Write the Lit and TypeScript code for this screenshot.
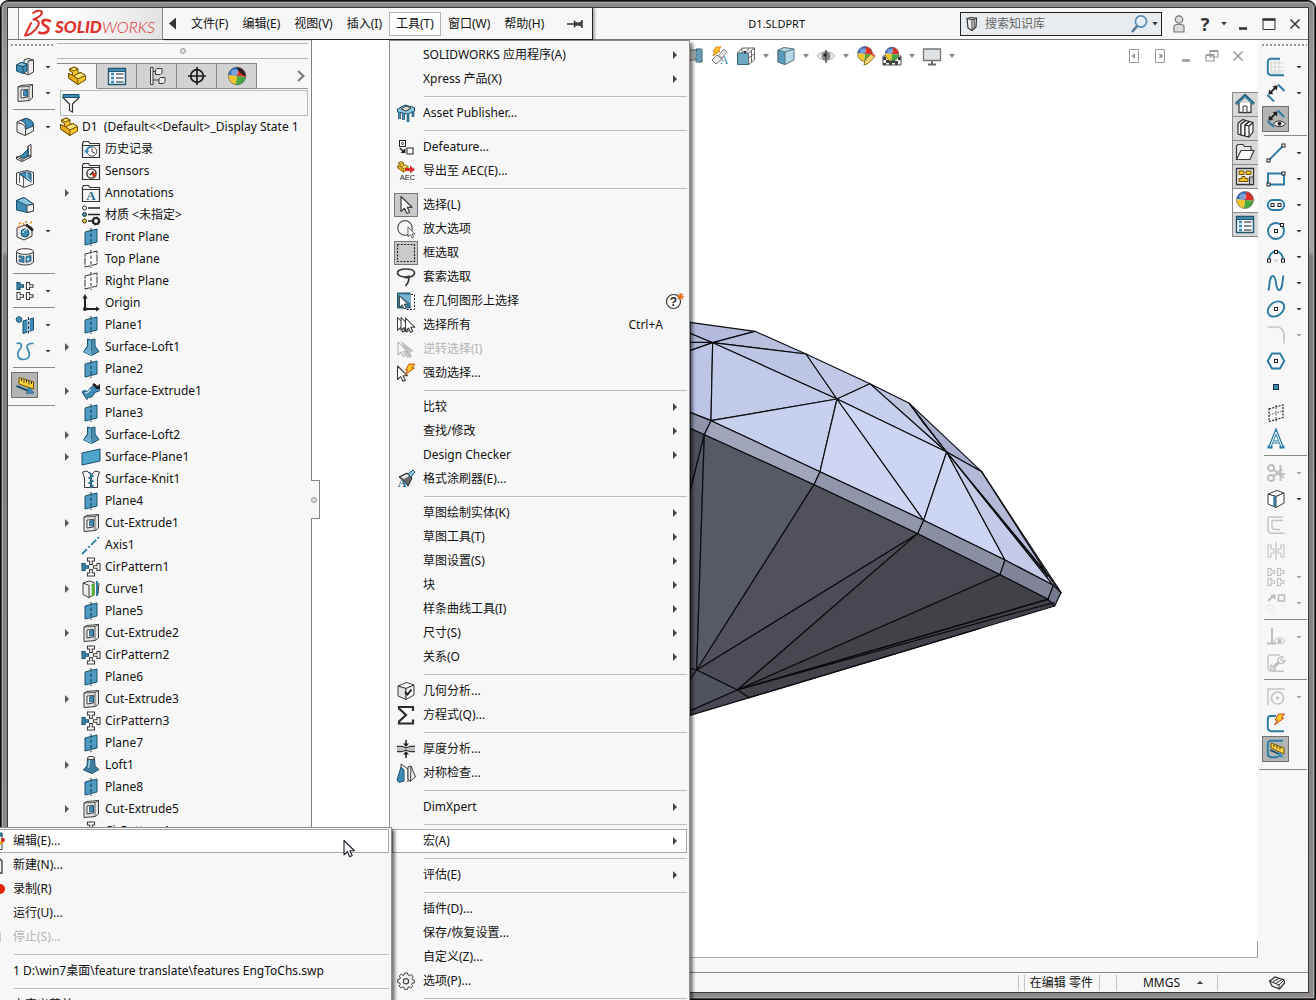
import { LitElement, html, svg, css, nothing, type SVGTemplateResult } from "lit";
import { customElement, property } from "lit/decorators.js";
import { classMap } from "lit/directives/class-map.js";

const BLUE = "#3f8db5";
const LIGHT = "#8cc8e0";
const DEEP = "#1b4f6b";
const INK = "#3c3c3c";

const ball = (cx: number, cy: number, r: number) => svg`
  <g transform="translate(${cx} ${cy})">
    <path d="M0 0L${-r} ${-r * 0.1}A${r} ${r} 0 0 1 ${r * 0.15} ${-r}Z" fill="#3572c6"/>
    <path d="M0 0L${r * 0.15} ${-r}A${r} ${r} 0 0 1 ${r} ${r * 0.1}Z" fill="#d9302a"/>
    <path d="M0 0L${r} ${r * 0.1}A${r} ${r} 0 0 1 ${-r * 0.15} ${r}Z" fill="#4aa842"/>
    <path d="M0 0L${-r * 0.15} ${r}A${r} ${r} 0 0 1 ${-r} ${-r * 0.1}Z" fill="#f0c52c"/>
    <ellipse cx="${-r * 0.25}" cy="${-r * 0.4}" rx="${r * 0.4}" ry="${r * 0.35}" fill="#fff" opacity=".35"/>
    <circle r="${r}" fill="none" stroke="#555" stroke-width=".6"/>
  </g>`;

const part = (s = 1, x = 0, y = 0) => svg`
  <g transform="translate(${x} ${y}) scale(${s})" stroke="#6b4d00" stroke-width="1" stroke-linejoin="round">
    <path d="M1.500 12V7.500L5.500 9.500V6.500L2.500 5V3L7 1L11 2.800V7.500L14 6.500L18.500 9.500V14L11 18.500Z" fill="#f6c62c"/>
    <path d="M2.500 3L7 1L11 2.800L6.500 5ZM10.500 13L18.500 9.500L14 6.500L6.500 9.600Z" fill="#ffe27a"/>
    <path d="M1.500 7.500L6.500 9.600L10.800 13.200V18.500L1.500 12Z" fill="#e9ae17"/>
  </g>`;

const folder = svg`<path d="M1.500 4.500V18.500H18.500V4.500H9L7.500 2.500H2.500Z" fill="#f4f4f4" stroke="#333" stroke-width="1.200"/><path d="M1.500 6.500H18.500" stroke="#333"/>`;

const pointer = (x: number, y: number, s: number, fill = "#fff", stroke = INK) => svg`
  <path transform="translate(${x} ${y}) scale(${s})" d="M0 0V15L3.600 11.800L6 17L8.600 15.800L6.200 10.800H11Z" fill="${fill}" stroke="${stroke}" stroke-width="1.200" stroke-linejoin="round"/>`;

const node = (x: number, y: number) => svg`<rect x="${x - 1.500}" y="${y - 1.500}" width="3" height="3" fill="#fff" stroke="#222"/>`;

const tee = (x: number, y: number, rot: number, fill: string, stroke = INK) => svg`
  <path transform="translate(${x} ${y}) rotate(${rot})" d="M-3 -3.500H0V-1.300H3.500V1.300H0V3.500H-3Z" fill="${fill}" stroke="${stroke}" stroke-width="1.100"/>`;

const cubeFaces = (top: string, left: string, right: string) => svg`
  <g stroke="${INK}" stroke-linejoin="round">
    <path d="M2 5L11 1.500L18 4L10 7.500Z" fill="${top}"/>
    <path d="M2 5L10 7.500V18.500L2 15Z" fill="${left}"/>
    <path d="M10 7.500L18 4V14L10 18.500Z" fill="${right}"/>
  </g>`;

const lightning = (x: number, y: number) => svg`<path transform="translate(${x} ${y})" d="M5 0L11 0L8 4H10.500L1 11L4 6H1.500Z" fill="#ffc52a" stroke="#c2410c" stroke-width=".9" stroke-linejoin="round"/>`;

const ICONS: Record<string, SVGTemplateResult> = {
  part: part(),
  boss: svg`<path d="M9 3L13 1.500L18.500 3V15L13 18L9 16Z" fill="#f0f0f0" stroke="${INK}"/><path d="M13 4V18M13 4L18.500 3" stroke="${INK}" fill="none"/><path d="M1.500 8L6 5.500L12 7V14L8 16.500L1.500 14Z" fill="${BLUE}" stroke="${DEEP}"/><path d="M1.500 8L6 5.500L12 7L8 9.500Z" fill="${LIGHT}" stroke="${DEEP}"/><path d="M8 9.500V16.500" stroke="${DEEP}"/>`,
  cut: svg`<path d="M3 4L6 2.500L17.500 1.500V15L14.500 17.500L3 18.500Z" fill="#e4e4e4" stroke="${INK}"/><path d="M3 4L14 3.500L17.500 1.500M14 3.500V17.500" fill="none" stroke="${INK}" stroke-width=".8"/><path d="M6 7L12.500 6.500V14L6 15Z" fill="#fff" stroke="${INK}"/><path d="M8.500 8L12.500 7V13L8.500 13Z" fill="${BLUE}" stroke="${DEEP}" stroke-width=".7"/>`,
  fillet: svg`<path d="M2 5L10 1.500C15 2 18 4 18.500 8V14L10 18.500L2 15Z" fill="#efefef" stroke="${INK}"/><path d="M6 3.500L10.500 1.500C15 2 18 4 18.500 9L11 12C11 8 10 5 6 3.500Z" fill="${BLUE}" stroke="${DEEP}"/><path d="M2 6C7 6 10 8 10.500 12V18" fill="none" stroke="${INK}"/>`,
  rib: svg`<path d="M13 3L16 1.500V14L7 18.500L1.500 16V14L13 11Z" fill="#efefef" stroke="${INK}" stroke-linejoin="round"/><path d="M13 3V12L16 14M7 18.500V16.500L1.500 14M7 16.500L16 12" fill="none" stroke="${INK}"/><path d="M13 6V13L8 15L5 14Z" fill="${BLUE}" stroke="${DEEP}"/>`,
  shell: svg`<path d="M1.500 4L12 1.500L18.500 3.500V15L9 18.500L1.500 15Z" fill="#f3f3f3" stroke="${INK}"/><path d="M4.500 5L12 3L16 4.500V13L8.500 8Z" fill="${BLUE}" stroke="${DEEP}"/><path d="M8.500 7V18M4.500 5V14" stroke="${INK}" stroke-width=".8"/><path d="M12 3V9L16 12" fill="none" stroke="#cfeaf5"/>`,
  draft: svg`<path d="M1.500 5.500L9 2.500L18.500 9V16L12 17.500L1.500 15Z" fill="${BLUE}" stroke="${DEEP}"/><path d="M1.500 5.500L9 2.500L18.500 9L12 10.500Z" fill="${LIGHT}" stroke="${DEEP}"/><path d="M12 10.500L18.500 9V16L12 17.500Z" fill="#f6f6f6" stroke="${INK}"/>`,
  wizard: svg`<path d="M2 7L10 4L17 6.500V15L9 19L2 16Z" fill="#efefef" stroke="${INK}"/><circle cx="10" cy="12" r="4" fill="${BLUE}" stroke="${DEEP}"/><path d="M8 12A3 3 0 0 1 12 9" stroke="#fff" fill="none"/><path d="M11 3.500L18 9.500" stroke="#222" stroke-width="2.600"/><path d="M4 3L6 1.500M8 2L9 4M10 1H12M15 2L17 1M3 6L5 5" stroke="#ef8a17" stroke-width="1.500"/>`,
  wrap: svg`<path d="M1.500 4.500V15C3 19 17 19 18.500 15V4.500" fill="#e9e9e9" stroke="${INK}"/><ellipse cx="10" cy="4.500" rx="8.500" ry="2.800" fill="#fafafa" stroke="${INK}"/><path d="M4 8.500L9 9.500V15.500L4 14.500V12.500L6.500 13V11L4 10.500Z" fill="${BLUE}" stroke="${DEEP}" stroke-width=".7"/><path d="M11 9.500L16 8.500V14L11 15.500Z" fill="${BLUE}" stroke="${DEEP}" stroke-width=".7"/><path d="M13 11V13.500" stroke="#fff" stroke-width="1.500"/>`,
  pattern: svg`${tee(5, 5, 0, BLUE, DEEP)}${tee(14.500, 5, 0, "#fff")}${tee(5, 15, 0, "#fff")}${tee(14.500, 15, 0, "#fff")}`,
  refgeom: svg`<circle cx="4" cy="4.500" r="2.800" fill="${BLUE}" stroke="${DEEP}"/><path d="M8 6L18.500 3V15L8 18.500Z" fill="${BLUE}" stroke="${DEEP}"/><path d="M13.500 2V19" stroke="#fff" stroke-width="2"/><path d="M13.500 2V19" stroke="#123" stroke-dasharray="3 1.500"/>`,
  curves: svg`<path d="M1.500 2.500C6 1 8 4 5 8C1 13 3 18.500 8 18.500C15 18.500 15.500 13 13 9C10.500 5 13 2 18.500 2.500" fill="none" stroke="${BLUE}" stroke-width="1.700"/>`,
  instant: svg`<path d="M4 2.500L18.500 7V14L4 9Z" fill="#ffd23a" stroke="#6b5200"/><path d="M6.500 3.500V6M9 4.500V8M11.500 5V7.500M14 6V9.500M16.500 6.500V9" stroke="#333"/><path d="M1.500 11L14 16" stroke="${DEEP}" stroke-width="2"/><path d="M11.500 18.500L19 18L14 12Z" fill="${BLUE}" stroke="${DEEP}" stroke-width=".6"/>`,
  history: svg`${folder}<circle cx="11" cy="12.500" r="4.700" fill="#fff" stroke="#555"/><path d="M5.500 12A5.500 5 0 0 1 11 7.500" fill="none" stroke="${BLUE}" stroke-width="1.800"/><path d="M3 11.500H8.500L5.800 15Z" fill="${BLUE}"/><path d="M11 9.500V12.500L14 14.500" fill="none" stroke="#222"/>`,
  sensor: svg`${folder}<circle cx="10.500" cy="12.500" r="4.600" fill="#fff" stroke="#333" stroke-width="1.400"/><path d="M10.500 12.500L15 11.500A4.600 4.600 0 0 1 12 16.500Z" fill="#e03a1e"/><path d="M9 14L12.500 10.500" stroke="#222" stroke-width="1.400"/>`,
  annot: svg`${folder}<text x="10" y="17" text-anchor="middle" font-family="Liberation Serif, serif" font-weight="bold" font-size="13" fill="#2a6d92">A</text>`,
  material: svg`<g stroke="#333"><circle cx="3.500" cy="3" r="2" fill="#fff"/><circle cx="3.500" cy="9.500" r="2" fill="${BLUE}"/><circle cx="3.500" cy="16" r="2" fill="#f6c62c"/></g><path d="M7 3H19M7 9.500H19M7 16H11" stroke="#222" stroke-width="1.600"/><circle cx="15" cy="16" r="3" fill="none" stroke="#222" stroke-width="2"/><circle cx="15" cy="16" r="4" fill="none" stroke="#222" stroke-dasharray="1.600 1.540"/>`,
  planeB: svg`<path d="M4 5L16 2V15L4 18Z" fill="#4f9cc2" stroke="${DEEP}"/><path d="M10 1V19" stroke="#12303f" stroke-dasharray="3.500 2"/>`,
  planeW: svg`<path d="M4 5L16 2V15L4 18Z" fill="#fafafa" stroke="#333" stroke-dasharray="7 1"/><path d="M10 1V19" stroke="#333" stroke-dasharray="3.500 2"/>`,
  origin: svg`<path d="M4 4V16H16" fill="none" stroke="#222" stroke-width="2"/><path d="M1.500 5.500H6.500L4 1ZM15 13.500V18.500L19 16Z" fill="#222"/><circle cx="4" cy="16" r="2" fill="#222"/>`,
  loftS: svg`<path d="M6.500 2L10 3L14 2V9L18 14.500L10.500 18.500L2.500 15L6.500 9Z" fill="#4c8fb0" stroke="${DEEP}"/><path d="M2.500 15L7.500 10V3L10 3.500V15L10.500 18.500Z" fill="#6dafce"/><path d="M10.500 3V14" stroke="#2b708f"/>`,
  extrudeS: svg`<path d="M1 11C4 7 6 14 9 7C11 5 13 6 14 3L19 9C17 11 15 10 13 13C10 19 8 14 6 18.500Z" fill="${BLUE}" stroke="${DEEP}"/><path d="M4 12C6 12 8 11 9.500 8" stroke="#b6deee" fill="none" stroke-width="1.500"/><path d="M12 3L17 7" stroke="#222" stroke-width="2.500"/><path d="M14 8H19V2.500Z" fill="#222"/>`,
  planeS: svg`<path d="M1 6L19 2V14L1 18Z" fill="#4fa6cb" stroke="${DEEP}"/>`,
  knit: svg`<path d="M1.500 3L6 2L9.500 5.500V18.500H3.500V9Z M18.500 3L14 2L10.500 5.500V18.500H16.500V9Z" fill="#f4f4f4" stroke="${INK}"/><path d="M8 3L12 7L8 9L12 12L8 14L12 17L9 19" fill="none" stroke="#2e7da6" stroke-width="1.500"/>`,
  axis: svg`<path d="M1 19L19 1" stroke="#2e7da6" stroke-width="1.800" stroke-dasharray="7 2 2 2"/>`,
  cir: svg`${tee(4, 10, 0, BLUE, DEEP)}${tee(10, 4, 90, "#fff")}${tee(16, 10, 180, "#fff")}${tee(10, 16, 270, "#fff")}`,
  curve: svg`<path d="M2 4L8 2L13 3.500V16L8 18.500L2 15.500Z" fill="#efefef" stroke="${INK}"/><path d="M2 4L8 6.500V18.500" fill="none" stroke="${INK}"/><path d="M12 5V17" stroke="#4caf2e" stroke-width="2.600"/><path d="M16 2V17" stroke="#2e7da6" stroke-width="2"/><path d="M18 4L17 15" stroke="${INK}"/>`,
  loft: svg`<path d="M6.500 3H13.500L14 11L18 14.500L11 18.500L2.500 15L6 11Z" fill="#427f9f" stroke="${DEEP}"/><ellipse cx="10" cy="3" rx="3.500" ry="1.600" fill="#fff" stroke="${INK}"/><path d="M8.500 5L7.500 13" stroke="#9fcfe2" stroke-width="1.500"/>`,
  list: svg`<path d="M1.500 2.500H18.500V18.500H1.500Z" fill="#f2f8fb" stroke="#24566e" stroke-width="1.400"/><path d="M1.500 2.500H18.500V5.500H1.500Z" fill="${BLUE}" stroke="#24566e"/><path d="M4 8H7M4 12H7M4 16H7" stroke="${BLUE}" stroke-width="2.400"/><path d="M9 8H16.500M9 12H16.500M9 16H16.500" stroke="#222" stroke-width="1.200"/>`,
  config: svg`<path d="M3.500 1.500H6V18.500H3.500Z" fill="#eee" stroke="${INK}"/><path d="M6 5.500H9M6 14H12" stroke="${INK}"/><g fill="#eee" stroke="${INK}"><path d="M8.500 4L10 2.500H15V7L13.500 8.500H8.500ZM12 13L13.500 11.500H18V15.500L16.500 17.500H12Z"/></g>`,
  target: svg`<circle cx="10" cy="10" r="6.300" fill="none" stroke="#1d1d1d" stroke-width="1.700"/><path d="M10 1V19M1 10H19" stroke="#1d1d1d" stroke-width="1.700"/>`,
  ball: ball(10, 10, 8.500),
  ballDark: svg`${ball(10, 10, 8.800)}<path d="M10 1.500C15 2 19 6 18.500 10C15 9 11 5 10 1.500Z" fill="#222"/>`,
  funnel: svg`<path d="M1.500 4L8.500 11V17.500L11.500 19V11L18.500 4" fill="#fff" stroke="#333" stroke-width="1.200"/><path d="M2 1.500H18V4.500H2Z" fill="${BLUE}" stroke="${DEEP}"/>`,
  asset: svg`<path d="M1.500 6L9 2L18.500 4.500V8L12 11L1.500 9Z" fill="${LIGHT}" stroke="${DEEP}"/><path d="M5 6L10 3L15 5L10 8Z" fill="#ddd" stroke="${INK}"/><path d="M3.500 9V16M7.500 10V17M12 11V19M17 8V14" stroke="${DEEP}" stroke-width="2.600"/><path d="M3.500 9V16M7.500 10V17M12 11V19M17 8V14" stroke="${BLUE}" stroke-width="1.200"/>`,
  defeature: svg`<rect x="3.500" y="3.500" width="6" height="6" fill="#fff" stroke="#222"/><circle cx="6.500" cy="6.500" r="1" fill="none" stroke="#222"/><rect x="11" y="11" width="6" height="6" fill="#fff" stroke="#222"/><path d="M4 11L8 15" stroke="#222" stroke-width="1.600"/><path d="M4.500 16H9.500V11Z" fill="#222"/>`,
  aec: svg`${part(0.6, 1, 0)}<path d="M9 7H14V4.500L19 8.500L14 12.500V10H9Z" fill="#dc2f2f"/><text x="11.500" y="19" text-anchor="middle" font-family="Liberation Sans, sans-serif" font-size="7.500" fill="#222">AEC</text>`,
  arrow: svg`${pointer(5, 1.500, 1)}`,
  zoomsel: svg`<circle cx="9" cy="9" r="7.300" fill="#f6f6f6" stroke="#555" stroke-width="1.200"/>${pointer(12, 8, 0.650)}`,
  box: svg`<rect x="1.500" y="1.500" width="17" height="17" fill="none" stroke="#222" stroke-width="1.200" stroke-dasharray="2 1.300"/>`,
  lasso: svg`<path d="M14 9C9 11 1.500 9.500 1.500 5.800C1.500 3.500 5 2 10 2C15 2 18.500 3.500 18.500 5.800C18.500 9 14 11 8.500 10.500M12 10C14 12 12 16.500 9.500 19" fill="none" stroke="#3a3a3a" stroke-width="1.700"/>`,
  selgeo: svg`<path d="M1.500 2H14V17H1.500Z" fill="#3f7f9f" stroke="#1b4f6b"/><path d="M2 3L14 12V4" fill="#78b5d0"/><path d="M15 3.500H18.500V18.500H10" fill="none" stroke="#222" stroke-dasharray="2 1.500"/>${pointer(3.500, 5, 0.750)}`,
  selall: svg`${pointer(1.500, 2.500, 0.850)}${pointer(5, 2.500, 0.850)}${pointer(9.500, 3, 0.850)}`,
  invert: svg`<path d="M5 2L18 12L14 13L16 18L11 19Z" fill="#c2c2c2"/>${pointer(2, 3, 0.850, "#f7f7f7", "#b5b5b5")}`,
  power: svg`${pointer(1.500, 3, 0.900)}${lightning(8, 1)}`,
  painter: svg`<path d="M3 8L11 4L16 9L12 17L8 12Z" fill="#6a6a6a" stroke="#222"/><path d="M5 8L11 5L13 7L8 10Z" fill="#eee"/><path d="M12 5L17 1L19 3L15 8Z" fill="${LIGHT}" stroke="${DEEP}"/><text x="6" y="18" text-anchor="middle" font-family="Liberation Serif, serif" font-weight="bold" font-size="12" fill="#2a6d92">A</text>`,
  geocheck: svg`${cubeFaces("#fff", "#e2e2e2", "#f3f3f3")}<path d="M9 11L11.500 13.500L15.500 8.500" fill="none" stroke="#222" stroke-width="2"/>`,
  sigma: svg`<path d="M17 6V2H3V3.500L10 10L3 16.500V18.500H17V14.500" fill="none" stroke="#2c2c2c" stroke-width="2.200"/>`,
  thick: svg`<path d="M1 7.500H6L10 9L14 7.500H19M1 12.500H6L10 11L14 12.500H19" fill="none" stroke="#333" stroke-width="1.300"/><path d="M1 9L6 9L10 10L14 9H19V11H14L10 10L6 11H1Z" fill="#bbb"/><path d="M10 1V6M10 14V19" stroke="#222" stroke-width="1.500"/><path d="M7 4.500H13L10 8ZM7 15.500H13L10 12Z" fill="#222"/>`,
  symm: svg`<path d="M1 17L5 4L8 7V18L3 19.500Z" fill="${BLUE}" stroke="${DEEP}"/><path d="M5 4V1L12 6V19" fill="none" stroke="${INK}"/><path d="M12 4L15 3L19.500 14L14 18.500L12 16Z" fill="#eee" stroke="${INK}"/><path d="M15 3L14.500 18" stroke="${INK}"/>`,
  gear: svg`<path d="M8.500 2H11.500L12 4L13.500 4.700L15.300 3.500L17 5.500L15.800 7.500L16.300 8.700L18.300 9V12L16 12.300L15.500 13.500L16.800 15.300L14.800 17L13 15.800L12 16.200L11.500 18.300H8.500L8 16.200L6.800 15.800L5 17L3 15L4.300 13.300L3.800 12L1.700 11.500V8.500L4 8L4.500 6.800L3.200 5L5.200 3.200L7 4.400L8 4Z" fill="#f2f2f2" stroke="#444"/><circle cx="10" cy="10.200" r="2.600" fill="#fff" stroke="#444" stroke-width="1.200"/>`,
  help: svg`<circle cx="8.500" cy="10.500" r="7" fill="#fff" stroke="#333" stroke-width="1.200"/><text x="8.500" y="15" text-anchor="middle" font-family="Liberation Sans, sans-serif" font-weight="bold" font-size="12" fill="#222">?</text><path d="M15.500 2V9M12 5.500H19M13 3L18 8M18 3L13 8" stroke="#e0731d" stroke-width="1.200"/>`,
  section: svg`<path d="M4 4H11V14H4Z" fill="#ddd" stroke="#777"/><path d="M10 4H14V14L10 12Z" fill="#e8e8e8" stroke="#777"/><path d="M12 3H18V16H12Z" fill="#5b95b0" stroke="#35637a"/><path d="M12 8L18 3M12 12L18 7M12 16L18 11" stroke="#9ec7d9" stroke-width=".7"/><path d="M1 4L5 3V17L1 18Z" fill="#49829c" stroke="#1b4f6b"/>`,
  light: svg`<path d="M2 14L7 9L12 13L6 18Z" fill="#eee" stroke="#777"/><path d="M8 10L14 3L17 6L12 12Z" fill="#e3e3e3" stroke="#888"/><path d="M6 1L11 1L8 5H10L3 10L5 6H3Z" fill="#ffc52a" stroke="#d8801a"/><text x="14" y="18" text-anchor="middle" font-family="Liberation Serif, serif" font-size="12" fill="#3f8db5">A</text>`,
  orient: svg`<path d="M1.500 7H12.500V18.500H1.500Z" fill="#6fa9c4" stroke="#35637a"/><path d="M1.500 7L6 2H18.500V14L12.500 18.500V7L18.500 2M6 2V7M12 2V5M15.500 5V16M12.500 12L18 8" fill="none" stroke="#666"/><path d="M7 5L9 8L11 5Z" fill="#333"/>`,
  display: svg`<path d="M2 4L8 1.500L18 3V14L9 18.500L2 16Z" fill="#b5d8e6" stroke="#55737f"/><path d="M9 6V18.500L2 16V4Z" fill="#5b9ab8" stroke="#55737f"/><path d="M9 6L18 3" stroke="#55737f"/>`,
  eye: svg`<path d="M1 10C5 4.500 15 4.500 19 10C15 15.500 5 15.500 1 10Z" fill="#eaeaea" stroke="#aaa"/><circle cx="10" cy="10" r="4.500" fill="#888"/><path d="M10 4V17" stroke="#555" stroke-width="1.500"/><circle cx="9" cy="9" r="1.500" fill="#222"/>`,
  ballpen: svg`${ball(9, 8, 7.500)}<path d="M8 19L9 14L15 8L18.500 11L12 17.500Z" fill="#f3d46a" stroke="#8a6d2a"/><path d="M15 8L18.500 11L19.500 9.500L17 7Z" fill="#e06b5a"/>`,
  scene: svg`<path d="M1 10H19V19H1Z" fill="#eee" stroke="#555"/><path d="M1 11H4V14H1ZM7 15H10V19H7ZM1 17H4V19H1ZM4 14H7V17H4ZM13 15H16V19H13ZM16 11H19V14H16ZM10 14H13V17H10Z" fill="#444"/>${ball(10, 8, 6.800)}`,
  monitor: svg`<path d="M1.500 3H18.500V14.500H1.500Z" fill="#dfe3e5" stroke="#777" stroke-width="1.300"/><path d="M10 15V18M6 18.500H14" stroke="#666" stroke-width="1.800"/>`,
  sketch: svg`<path d="M5 2V16H17M9 2V17M13 2V17M4 6H18M4 10H18M4 14H18" stroke="#ccc" stroke-width=".7" fill="none"/><path d="M14 1.800H5C3 1.800 1.800 3 1.800 5V14.500C1.800 17 3 18.200 5.500 18.200H18" fill="none" stroke="#2b7ba5" stroke-width="1.900"/>`,
  dim: svg`<path d="M8 18.500L1.500 12M18.500 8L12 1.500" stroke="#2b7ba5" stroke-width="1.900"/><path d="M4 10L10 4" stroke="#222" stroke-width="1.800"/><path d="M2.500 11.500L3 6.500L7.500 11ZM11.500 2.500L6.500 3L11 7.500Z" fill="#222"/>`,
  dimEye: svg`<path d="M8 18L1.500 12M18 8L12 1.500" stroke="#2b7ba5" stroke-width="1.900"/><path d="M4 10L10 4" stroke="#222" stroke-width="1.800"/><path d="M2.500 11.500L3 6.500L7.500 11ZM11.500 2.500L6.500 3L11 7.500Z" fill="#222"/><path d="M7.500 15C10 11 16.500 11 19.500 15C16.500 18.500 10 18.500 7.500 15Z" fill="#fff" stroke="#222"/><circle cx="13.500" cy="14.800" r="2" fill="#222"/>`,
  line: svg`<path d="M2.500 17.500L17.500 2.500" stroke="#2b7ba5" stroke-width="1.900"/>${node(2.500, 17.500)}${node(17.500, 2.500)}`,
  rect: svg`<path d="M2 4.500H18V15.500H2Z" fill="none" stroke="#2b7ba5" stroke-width="1.900"/>${node(2.500, 15.500)}${node(17.500, 4.500)}`,
  slot: svg`<rect x="1.800" y="5" width="16.400" height="10" rx="5" fill="none" stroke="#2b7ba5" stroke-width="1.900"/>${node(6.500, 10)}${node(13.500, 10)}`,
  circle: svg`<circle cx="10" cy="10" r="8" fill="none" stroke="#2b7ba5" stroke-width="1.900"/>${node(10, 10)}${node(16, 4)}`,
  arc: svg`<path d="M3 13C3 1.500 17 1.500 17 13" fill="none" stroke="#2b7ba5" stroke-width="1.900"/><path d="M8.500 12L11.500 15M11.500 12L8.500 15" stroke="#aaa" stroke-width=".8"/>${node(3, 13.500)}${node(10, 5)}${node(17, 13.500)}`,
  spline: svg`<path d="M2.500 17.500C4 12 3 3 7 3C11 3 9 17 13 17C17 17 16 8 17.500 2.500" fill="none" stroke="#2b7ba5" stroke-width="1.900"/>`,
  ellipse: svg`<ellipse cx="10" cy="10" rx="9" ry="6.700" transform="rotate(-38 10 10)" fill="none" stroke="#2b7ba5" stroke-width="1.900"/>${node(10, 10)}`,
  corner: svg`<path d="M1.500 2H10C15 2 18 5 18 10V18.500" fill="none" stroke="#8a8a8a" stroke-width="1.700"/>`,
  hex: svg`<path d="M6 2.500H14L18.300 10L14 17.500H6L1.700 10Z" fill="none" stroke="#2b7ba5" stroke-width="1.900"/>${node(10, 10)}`,
  point: svg`<rect x="7.500" y="7.500" width="5" height="5" fill="${BLUE}" stroke="#12303f"/>`,
  dashPlane: svg`<path d="M3 6L17 2V14.500L3 18.500Z" fill="none" stroke="#222" stroke-width="1.200" stroke-dasharray="2 1.300"/><path d="M10 2V19M3 12L17 8" stroke="#555" stroke-dasharray="1.500 1.500"/>`,
  textA: svg`<path d="M1.500 18H6.500M13.500 18H18.500M4 17.500L10 2.500L16 17.500M6.500 13H13.500" fill="none" stroke="#2b7ba5" stroke-width="3.200"/><path d="M4.200 17.500L10 3L15.800 17.500M7 13H13" fill="none" stroke="#fff" stroke-width="1"/>`,
  trim: svg`<g fill="none" stroke="#777" stroke-width="1.900"><circle cx="5" cy="5" r="3"/><circle cx="5" cy="15" r="3"/><path d="M7.500 6.500L18 15M7.500 13.500L16 6M14.500 2V18M10 11H19"/></g>`,
  convert: svg`${cubeFaces("#fff", "#fff", "#fff")}<path d="M8.500 7.500V17.500" stroke="#2b7ba5" stroke-width="2.400"/>`,
  offset: svg`<g fill="none" stroke="#888" stroke-width="1.500"><path d="M17 2H4C2.500 2 2 3 2 4V14C2 17 3 18.200 6 18.200H18.500"/><path d="M17 5.500H8C6.500 5.500 6 6 6 7V12C6 14 7 14.500 9 14.500H14"/></g>`,
  mirror: svg`<g fill="none" stroke="#888" stroke-width="1.200"><path d="M10 1V19M2 4V16H5V12H8V8H5V4ZM18 4V16H15V12H12V8H15V4Z"/></g>`,
  patternG: svg`${tee(5, 5, 0, "none", "#777")}${tee(14.500, 5, 0, "none", "#777")}${tee(5, 15, 0, "none", "#777")}${tee(14.500, 15, 0, "none", "#777")}`,
  move: svg`<path d="M2 8L8 2" stroke="#777" stroke-width="2"/><path d="M4 1.500H9.500V7Z" fill="#777"/><rect x="12.500" y="2" width="6" height="6" fill="none" stroke="#777" stroke-width="1.600"/><rect x="2" y="12" width="6" height="6" fill="none" stroke="#bbb" stroke-dasharray="1 1"/>`,
  relation: svg`<path d="M6 1V16M1 16.500H10" stroke="#777" stroke-width="1.900"/><path d="M8 14C10.500 10 16.500 10 19 14C16.500 17.500 10.500 17.500 8 14Z" fill="#fff" stroke="#777"/><circle cx="13.500" cy="14" r="2" fill="#777"/>`,
  repair: svg`<path d="M14 2H4C2.500 2 2 3 2 4V14C2 17 3 18.200 6 18.200H18" fill="none" stroke="#888" stroke-width="1.500"/><path d="M8 14L14 8" stroke="#777" stroke-width="3"/><path d="M17 4A3.500 3.500 0 1 0 19 7.500L16.500 8L15 6.500Z" fill="#fff" stroke="#777" stroke-width="1.200"/><path d="M5.500 12A3 3 0 1 0 9.500 16.500L7.500 15Z" fill="#fff" stroke="#777" stroke-width="1.200"/>`,
  snap: svg`<path d="M2 18.500V2H18.500" fill="none" stroke="#888" stroke-width="1.500"/><circle cx="11.500" cy="11" r="6" fill="none" stroke="#888" stroke-width="1.700"/><circle cx="11.500" cy="11" r="1.700" fill="#888"/>`,
  rapid: svg`<path d="M10 3H4.500C2.500 3 1.800 4 1.800 6V14.500C1.800 17 3 18.200 5.500 18.200H18" fill="none" stroke="#2b7ba5" stroke-width="1.900"/>${lightning(7.500, 1)}`,
  instant2: svg`<path d="M17 1.800H5C3 1.800 1.800 3 1.800 5V14.500C1.800 17 3 18.200 5.500 18.200H12" fill="none" stroke="#2b7ba5" stroke-width="1.900"/><path d="M5 4L18 9V15L5 9Z" fill="#ffd23a" stroke="#6b5200"/><path d="M8 5.500V8M11 6.500V9.500M14 8V10.500" stroke="#333"/><path d="M4 11L13 15" stroke="${DEEP}" stroke-width="1.800"/><path d="M11 18L18 18.500L13.500 12.500Z" fill="${BLUE}"/>`,
  home: svg`<path d="M4 9V18.500H16V9" fill="#fff" stroke="${INK}" stroke-width="1.300"/><path d="M1 10L10 1.500L19 10" fill="none" stroke="#24566e" stroke-width="3"/><path d="M1.500 10L10 2.200L18.500 10" fill="none" stroke="${BLUE}" stroke-width="1.200"/><path d="M8 18V12H12V18" fill="#eee" stroke="${INK}"/>`,
  books: svg`<g fill="#f5f5f5" stroke="#222" stroke-width="1.100" stroke-linejoin="round"><path d="M3 5L8 1.500L11 2.500L6 6V17L3 16Z"/><path d="M6 6L11 2.500L14.500 3.500L10 7V18L6 17Z"/><path d="M10 7L14.500 3.500L18 4.500V14L14 19L10 18Z"/><path d="M14 8V19M14 8L18 4.500M10 7L14 8"/></g>`,
  openf: svg`<path d="M1.500 17V4L3 2.500H8L9.500 4.500H16V8" fill="#e8e8e8" stroke="${INK}" stroke-width="1.200"/><path d="M1.500 17.500L6 8.500H19L15 17.500Z" fill="#f8f8f8" stroke="${INK}" stroke-width="1.200"/>`,
  palette: svg`<path d="M1.500 2.500H18.500V18.500H1.500Z" fill="#eee" stroke="#333" stroke-width="1.300"/><path d="M4 5H9V8.500H4ZM11 5H16V8.500H11ZM4 15.500V12.500H7V10.500H10V12.500H13V15.500Z" fill="#f6c62c" stroke="#6b4d00"/><path d="M14.500 11H18.500V18.500H14.500Z" fill="#bbb" stroke="#333"/>`,
  macroEdit: svg`<path d="M4 2.500H16V18.500H4Z" fill="#fff" stroke="${INK}"/><path d="M4 2H16V5H4Z" fill="${BLUE}" stroke="${DEEP}"/><path d="M8 17L17 10" stroke="#e0a52a" stroke-width="3"/><circle cx="17" cy="9" r="2" fill="#c22"/>`,
  macroNew: svg`<path d="M5 3H13L16 6V18H5Z" fill="#eee" stroke="${INK}" stroke-width="1.300"/><path d="M7 10H14" stroke="${INK}"/>`,
  record: svg`<circle cx="14" cy="10" r="5" fill="#e02408"/>`,
  play: svg`<path d="M5 4L14 10L5 16Z" fill="#ddd"/>`,
  stop: svg`<rect x="5" y="5" width="10" height="10" fill="#ccc"/>`,
  pin: svg`<path d="M2 10H9M17 6V14M9.500 6.500V13.500" stroke="#333" stroke-width="1.400"/><path d="M9.500 7.500L13 8.500L17 7V13L13 11.500L9.500 12.500Z" fill="#444"/>`,
  swcube: svg`<path d="M5 4.500L9 3.500L14.500 4.200L14 13L10 16.500L6 14Z" fill="#eee" stroke="#333" stroke-width="1.200"/><path d="M5 4.500L10 5.800L14.500 4.200M10 5.800V16.500M12.200 5V14.500" fill="none" stroke="#333"/>`,
  lens: svg`<path d="M3 18L8.500 11.500" stroke="#5b7896" stroke-width="2.600"/><circle cx="12" cy="7.500" r="5.600" fill="#e4eff8" stroke="#5b8cb8" stroke-width="1.700"/><path d="M9 7A3.500 3.500 0 0 1 12 4" fill="none" stroke="#fff" stroke-width="1.400"/>`,
  person: svg`<circle cx="10" cy="5.500" r="3.700" fill="#ddd" stroke="#777" stroke-width="1.200"/><path d="M5 18V12.500C5 9.500 15 9.500 15 12.500V18Z" fill="#ddd" stroke="#777" stroke-width="1.200"/>`,
  min: svg`<path d="M6 14.500H14" stroke="currentColor" stroke-width="2.600"/>`,
  max: svg`<path d="M4 5.500H16V15.500H4Z" fill="none" stroke="currentColor"/><path d="M3.500 5.500H16.500" stroke="currentColor" stroke-width="2.600"/>`,
  close: svg`<path d="M5.500 5.500L14.500 14.500M14.500 5.500L5.500 14.500" stroke="currentColor" stroke-width="1.500"/>`,
  restore: svg`<path d="M8 5H16V11H8ZM4 9H12V15H4Z" fill="#fff" stroke="currentColor" stroke-width="1.200"/><path d="M8 5H16M4 9H12" stroke="currentColor" stroke-width="1.800"/>`,
  paneL: svg`<path d="M5.500 3.500H14.500V16.500H5.500Z" fill="none" stroke="currentColor"/><path d="M11 7V13L7.500 10Z" fill="currentColor"/>`,
  paneR: svg`<path d="M5.500 3.500H14.500V16.500H5.500Z" fill="none" stroke="currentColor"/><path d="M9.500 7V13L13.500 10Z" fill="currentColor"/>`,
  tag: svg`<path d="M2.500 8L8 4L17 7L17.500 10L12.500 16L5 13Z" fill="#eee" stroke="#333" stroke-width="1.200"/><path d="M2.500 8L12 12L17 7M12 12V16M6 8.500L12 5.500M9 10L15 6.500" fill="none" stroke="#333"/>`,
};

const icon = (name: string) => html`<svg class="icon" width="20" height="20" viewBox="0 0 20 20" aria-hidden="true">${ICONS[name]}</svg>`;

interface Tool { icon?: string; drop?: boolean; off?: boolean; on?: boolean; sep?: boolean }
const t = (i: string, flags = ""): Tool => ({ icon: i, drop: flags.includes("d"), off: flags.includes("x"), on: flags.includes("p") });
const SEP: Tool = { sep: true };

const LEFT_TOOLS: Tool[] = [
  t("boss", "d"), t("cut", "d"), SEP,
  t("fillet", "d"), t("rib"), t("shell"), t("draft"), t("wizard", "d"), t("wrap"), SEP,
  t("pattern", "d"), SEP, t("refgeom", "d"), t("curves", "d"), SEP, t("instant", "p"), SEP,
];

const RIGHT_TOOLS: Tool[] = [
  t("sketch", "d"), t("dim", "d"), t("dimEye", "p"), SEP,
  t("line", "d"), t("rect", "d"), t("slot", "d"), t("circle", "d"), t("arc", "d"), t("spline", "d"),
  t("ellipse", "d"), t("corner", "dx"), t("hex"), t("point"), t("dashPlane"), t("textA"), SEP,
  t("trim", "dx"), t("convert", "d"), t("offset", "x"), t("mirror", "x"), t("patternG", "dx"), t("move", "dx"), SEP,
  t("relation", "dx"), t("repair", "x"), SEP, t("snap", "dx"), t("rapid"), t("instant2", "p"), SEP,
];

const TREE: [string, string, boolean?][] = [
  ["history", "历史记录"], ["sensor", "Sensors"], ["annot", "Annotations", true], ["material", "材质 <未指定>"],
  ["planeB", "Front Plane"], ["planeW", "Top Plane"], ["planeW", "Right Plane"], ["origin", "Origin"],
  ["planeB", "Plane1"], ["loftS", "Surface-Loft1", true], ["planeB", "Plane2"], ["extrudeS", "Surface-Extrude1", true],
  ["planeB", "Plane3"], ["loftS", "Surface-Loft2", true], ["planeS", "Surface-Plane1", true], ["knit", "Surface-Knit1"],
  ["planeB", "Plane4"], ["cut", "Cut-Extrude1", true], ["axis", "Axis1"], ["cir", "CirPattern1"],
  ["curve", "Curve1", true], ["planeB", "Plane5"], ["cut", "Cut-Extrude2", true], ["cir", "CirPattern2"],
  ["planeB", "Plane6"], ["cut", "Cut-Extrude3", true], ["cir", "CirPattern3"], ["planeB", "Plane7"],
  ["loft", "Loft1", true], ["planeB", "Plane8"], ["cut", "Cut-Extrude5", true], ["cir", "CirPattern4"],
];

interface Item { label?: string; icon?: string; sub?: boolean; key?: string; on?: boolean; off?: boolean; hot?: boolean; help?: boolean }
const LINE: Item = {};
const m = (label: string, extra: Partial<Item> = {}): Item => ({ label, ...extra });
const sub = (label: string): Item => ({ label, sub: true });

const TOOLS_MENU: Item[] = [
  sub("SOLIDWORKS 应用程序(A)"), sub("Xpress 产品(X)"), LINE,
  m("Asset Publisher...", { icon: "asset" }), LINE,
  m("Defeature...", { icon: "defeature" }), m("导出至 AEC(E)...", { icon: "aec" }), LINE,
  m("选择(L)", { icon: "arrow", on: true }), m("放大选项", { icon: "zoomsel" }),
  m("框选取", { icon: "box", on: true }), m("套索选取", { icon: "lasso" }),
  m("在几何图形上选择", { icon: "selgeo", help: true }), m("选择所有", { icon: "selall", key: "Ctrl+A" }),
  m("逆转选择(I)", { icon: "invert", off: true }), m("强劲选择...", { icon: "power" }), LINE,
  sub("比较"), sub("查找/修改"), sub("Design Checker"), m("格式涂刷器(E)...", { icon: "painter" }), LINE,
  sub("草图绘制实体(K)"), sub("草图工具(T)"), sub("草图设置(S)"), sub("块"), sub("样条曲线工具(I)"), sub("尺寸(S)"), sub("关系(O"), LINE,
  m("几何分析...", { icon: "geocheck" }), m("方程式(Q)...", { icon: "sigma" }), LINE,
  m("厚度分析...", { icon: "thick" }), m("对称检查...", { icon: "symm" }), LINE,
  sub("DimXpert"), LINE, m("宏(A)", { sub: true, hot: true }), LINE, sub("评估(E)"), LINE,
  m("插件(D)..."), m("保存/恢复设置..."), m("自定义(Z)..."), m("选项(P)...", { icon: "gear" }), LINE,
];

const MACRO_MENU: Item[] = [
  m("编辑(E)...", { icon: "macroEdit", hot: true }), m("新建(N)...", { icon: "macroNew" }), m("录制(R)", { icon: "record" }),
  m("运行(U)...", { icon: "play" }), m("停止(S)...", { icon: "stop", off: true }), LINE,
  m("1 D:\\win7桌面\\feature translate\\features EngToChs.swp"), LINE, m("自定义菜单(M)"),
];

const base = css`
  * { box-sizing: border-box; }
  button { font: inherit; color: inherit; background: none; border: 0; padding: 0; margin: 0; text-align: left; }
  .icon { display: block; flex: none; overflow: visible; }
`;

@customElement("sw-menu")
class SwMenu extends LitElement {
  @property({ attribute: false }) items: Item[] = [];

  static styles = [base, css`
    :host { display: block; background: #f7f7f7; border: 1px solid #8f8f8f; padding: 1px 2px; box-shadow: 3px 3px 3px rgba(0, 0, 0, .5); }
    .row { display: flex; align-items: center; width: 100%; height: 24px; border: 1px solid transparent; white-space: nowrap; }
    .hot { background: #fff; border-color: #a9a9a9; }
    .off { color: #b4b4b4; }
    .slot { flex: none; width: 24px; height: 24px; margin-left: 1px; margin-right: 5px; display: flex; align-items: center; justify-content: center; }
    .on { background: #c9cacc; border: 1px solid #777; }
    .label { flex: 1; }
    .key { margin-right: 23px; }
    .more { width: 4px; height: 8px; margin-right: 9px; background: #444; clip-path: polygon(0 0, 100% 50%, 0 100%); }
    .help { margin-right: 1px; }
    hr { margin: 5px 0 4px 32px; border: 0; height: 1px; background: #bdbdbd; }
  `];

  render() {
    return this.items.map((i) => i.label === undefined ? html`<hr>` : html`
      <button class=${classMap({ row: true, hot: !!i.hot, off: !!i.off })} ?disabled=${i.off}>
        <span class=${classMap({ slot: true, on: !!i.on })}>${i.icon ? icon(i.icon) : nothing}</span>
        <span class="label">${i.label}</span>
        ${i.key ? html`<span class="key">${i.key}</span>` : nothing}
        ${i.help ? html`<span class="help">${icon("help")}</span>` : nothing}
        ${i.sub ? html`<span class="more"></span>` : nothing}
      </button>`);
  }
}

@customElement("sw-toolbar")
class SwToolbar extends LitElement {
  @property({ attribute: false }) tools: Tool[] = [];

  static styles = [base, css`
    :host { display: block; padding: 4px 2px 0 3px; }
    .grip { height: 2px; margin-bottom: 8px; background: repeating-linear-gradient(90deg, #999 0 2px, transparent 2px 4px); }
    .row { display: flex; align-items: center; height: 26px; }
    .tool { width: 27px; height: 26px; display: flex; align-items: center; justify-content: center; }
    .on { background: #b4b4b4; border: 1px solid #707070; }
    .off { opacity: .45; filter: grayscale(1); }
    .drop { margin-left: 7px; width: 6px; height: 3px; background: #333; clip-path: polygon(0 0, 100% 0, 50% 100%); }
    hr { margin: 3px 0 4px 2px; border: 0; height: 1px; background: #8a8a8a; }
    hr:last-of-type { margin: 7px 0 0 -3px; }
  `];

  render() {
    return html`<div class="grip"></div>${this.tools.map((x) => x.sep ? html`<hr>` : html`
      <div class=${classMap({ row: true, off: !!x.off })}>
        <button class=${classMap({ tool: true, on: !!x.on })} aria-label=${x.icon!}>${icon(x.icon!)}</button>
        ${x.drop ? html`<span class="drop"></span>` : nothing}
      </div>`)}`;
  }
}

const FACETS: [string, string][] = [
  ["30,37 225,64 98,98 30,70", "#b3badb"],
  ["30,70 98,98 30,122", "#b0b7d6"],
  ["225,64 378,132 98,98", "#b9c0df"],
  ["30,122 98,98 93,332 30,307", "#bcc5e6"],
  ["98,98 378,132 471,267", "#bdc5e4"],
  ["98,98 471,267 93,332", "#c2cae9"],
  ["378,132 570,221 471,267", "#c0c8e6"],
  ["570,221 471,267 800,426", "#c6cfed"],
  ["570,221 688,280 800,426", "#bcc4e0"],
  ["688,280 905,485 800,426", "#a7aecb"],
  ["93,332 471,267 420,485", "#c8d0ef"],
  ["471,267 731,631 420,485", "#cdd5f3"],
  ["471,267 800,426 731,631", "#cdd5f4"],
  ["800,426 975,750 731,631", "#ccd5f4"],
  ["800,426 1120,826 975,750", "#c3cbe9"],
  ["800,426 905,485 1143,848 1120,826", "#b3bad7"],
  ["30,307 93,332 73,374 30,355", "#8f94aa"],
  ["93,332 420,485 402,524 73,374", "#a1a5ba"],
  ["420,485 731,631 713,671 402,524", "#9195aa"],
  ["731,631 975,750 960,794 713,671", "#8b8fa4"],
  ["975,750 1120,826 1104,868 960,794", "#818498"],
  ["1120,826 1143,848 1124,888 1104,868", "#74788c"],
  ["30,355 73,374 30,545", "#4d4f5a"],
  ["73,374 50,1080 30,1075 30,545", "#535560"],
  ["73,374 402,524 50,1080", "#575964"],
  ["402,524 713,671 50,1080", "#50515b"],
  ["713,671 172,1140 50,1080", "#4b4c56"],
  ["713,671 960,794 172,1140", "#46474f"],
  ["960,794 1104,868 172,1140", "#414248"],
  ["1104,868 1124,888 208,1163 172,1140", "#43434b"],
  ["30,1075 50,1080 172,1140 30,1203", "#50525d"],
  ["172,1140 208,1163 30,1216 30,1203", "#474852"],
];

const EDGES = "M30 97H98M688 280L731 340L800 426L1104 800M905 485L1100 790L1143 848M800 426L1120 815M172 1140L1104 868M172 1140L1000 910L1124 878M208 1163L900 955M50 1080L30 1108";

@customElement("app-root")
class AppRoot extends LitElement {
  static styles = [base, css`
    :host { display: block; position: relative; height: 100vh; overflow: hidden; background: #fff; color: #111; font: 12px/16px "Noto Sans", "Noto Sans CJK SC", sans-serif; }
    .window { height: 100%; padding: 7px; border: 1px solid #111; border-radius: 8px 8px 0 0; background: linear-gradient(180deg, #8d898a 0, #a8a4a4 120px, #a8a4a4 250px, #807c7d 256px, #8d898a 100%); box-shadow: inset 0 0 0 1px #444, inset 0 0 0 2px #b0acac; }
    .inner { height: 100%; display: flex; flex-direction: column; background: #f7f7f7; outline: 1px solid #3b3b3b; }

    .titlebar { display: flex; align-items: center; height: 32px; flex: none; border-bottom: 1px solid #777; }
    .logo { display: flex; align-items: center; height: 31px; width: 145px; margin-left: 10px; padding-left: 4px; border: solid #8a8a8a; border-width: 0 1px; background: linear-gradient(90deg, #fff 30%, #e2e2e2); color: #e0322c; font: italic 17px/20px Lato, sans-serif; white-space: nowrap; }
    .mark { flex: none; margin-right: 3px; }
    .word { margin-top: 7px; }
    .word b { font-weight: 900; }
    .word i { font-weight: 300; font-size: 16px; }
    .menubar { display: flex; align-items: center; align-self: stretch; height: 32px; padding-left: 6px; border: solid #222; border-width: 0 1px 1px 0; box-shadow: 2px 0 2px rgba(0, 0, 0, .3); white-space: nowrap; }
    .back { width: 7px; height: 12px; margin-right: 8px; background: #333; clip-path: polygon(100% 0, 100% 100%, 0 50%); }
    .menubar button { height: 24px; padding: 0 6px; border: 1px solid transparent; }
    .menubar .open { background: #fff; border-color: #b5b5b5; }
    .menubar .pin { padding: 0; margin: 0 6px 0 13px; height: 22px; }
    .caption { flex: 1; text-align: center; font-size: 11px; }
    .search { display: flex; align-items: center; width: 202px; height: 24px; border: 1px solid #222; background: #e8ebef; padding: 0 3px 0 1px; gap: 3px; }
    .search input { flex: 1; min-width: 0; border: 0; outline: 0; background: none; font: inherit; padding: 0; }
    .search input::placeholder { color: #666; opacity: 1; }
    .caret { flex: none; width: 6px; height: 4px; background: #333; clip-path: polygon(0 0, 100% 0, 50% 100%); }
    .system { display: flex; align-items: center; color: #333; padding: 0 3px 0 7px; gap: 6px; }
    .system .ask { width: 20px; font: bold 18px/20px "Noto Sans", sans-serif; text-align: center; }

    .body { flex: 1; min-height: 0; display: grid; grid-template-columns: 49px 255px 1fr 50px; }
    .tree-panel { position: relative; z-index: 1; min-height: 0; border-right: 1px solid #808080; display: flex; flex-direction: column; }
    .splitter { height: 16px; margin: 3px 3px 4px 0; border: solid #b5b5b5; border-width: 1px 0; display: flex; align-items: center; justify-content: center; flex: none; }
    .dot { flex: none; width: 6px; height: 6px; border: 1px solid #999; border-radius: 50%; background: #ddd; }
    .tabs { display: flex; height: 26px; flex: none; margin-right: 3px; border-bottom: 1px solid #999; }
    .tabs button { width: 40px; height: 26px; display: flex; align-items: center; justify-content: center; border: 1px solid #888; border-left: 0; background: #d3d3d3; }
    .tabs .current { background: #f7f7f7; border-bottom-color: #f7f7f7; }
    .tabs .next { width: auto; height: 25px; margin-left: auto; padding-right: 3px; border: 0; background: none; }
    .filter { height: 26px; flex: none; margin: 1px 3px 0 3px; border: 1px solid #bbb; display: flex; align-items: center; }
    .tree { flex: 1; min-height: 0; overflow: hidden; list-style: none; margin: 0; padding: 0; }
    .tree li { display: flex; align-items: center; height: 22px; padding-left: 8px; white-space: pre; }
    .tree .root { padding-left: 2px; overflow: hidden; gap: 3px; margin-right: 2px; }
    .twist { width: 4px; height: 8px; margin-right: 12px; flex: none; }
    .twist.has { background: #555; clip-path: polygon(0 0, 100% 50%, 0 100%); }
    .tree .icon { margin-right: 4px; }
    .tree .root .icon { margin-right: 0; }
    .handle { position: absolute; right: -9px; top: 440px; width: 9px; height: 39px; border: 1px solid #888; border-left: 0; background: #f7f7f7; display: flex; align-items: center; }

    .viewport { position: relative; min-width: 0; background: #fff; display: flex; flex-direction: column; }
    .heads { display: flex; align-items: center; justify-content: flex-end; height: 32px; padding-right: 10px; }
    .heads .view { display: flex; align-items: center; gap: 6px; margin-right: 168px; }
    .heads .caret { background: #888; margin: 0 1px; }
    .heads .docs { display: flex; gap: 6px; color: #999; }
    .panes { align-self: flex-end; margin-top: 20px; width: 26px; border: solid #888; border-width: 1px 0 0 1px; }
    .panes button { width: 25px; height: 24px; padding: 0 2px 1px 0; display: flex; align-items: center; justify-content: center; background: #d8d8d8; border-bottom: 1px solid #888; }
    .panes .current { background: #fff; }
    .model { position: absolute; left: 378px; top: 280px; }
    .thumb { align-self: flex-end; margin-top: auto; width: 1px; height: 16px; background: #999; }
    .below { height: 15px; background: #f7f7f7; border-top: 1px solid #aaa; }

    .status { flex: none; height: 20px; border-top: 1px solid #888; display: flex; align-items: center; justify-content: flex-end; }
    .status span { border-left: 1px solid #c4c4c4; height: 16px; }
    .status .mode { padding: 0 6px 0 5px; border-right: 1px solid #c4c4c4; margin-left: 5px; }
    .status .units { margin-left: 16px; padding: 0 17px 0 26px; }
    .status .up { border: 0; width: 6px; height: 3px; background: #333; clip-path: polygon(50% 0, 100% 100%, 0 100%); margin-right: 14px; }
    .status .gap { width: 50px; }
    .status .icon { margin-right: 21px; }

    .tools-menu { position: absolute; left: 389px; top: 40px; width: 301px; padding-top: 2px; }
    .macro-menu { position: absolute; left: -21px; top: 827px; width: 413px; z-index: 1; }
    .cursor { position: absolute; left: 343px; top: 839px; z-index: 2; }
    .sketch-tools { padding-left: 4px; padding-right: 1px; }
  `];

  render() {
    return html`
      <div class="window"><div class="inner">
        <header class="titlebar">
          <div class="logo">
            <svg class="mark" width="29" height="29" viewBox="0 0 29 29" aria-hidden="true">
              <g fill="none" stroke="#e0322c" stroke-linecap="round" stroke-linejoin="round">
                <path d="M10 4C14 1 19 1 19 4C18.500 7 14 9 10.500 10.500C15 10.500 17 13 15 17C12 23 6 26 2 26.500L8 14" stroke-width="2"/>
                <path d="M27 12C23 10 19 11 19.500 14C20 17 26 17 25.500 20.500C25 24 20 25 16 23.500" stroke-width="2.600"/>
              </g>
            </svg>
            <span class="word"><b>SOLID</b><i>WORKS</i></span>
          </div>
          <nav class="menubar">
            <span class="back"></span>
            ${["文件(F)", "编辑(E)", "视图(V)", "插入(I)", "工具(T)", "窗口(W)", "帮助(H)"].map((x) => html`<button class=${classMap({ open: x.startsWith("工具") })}>${x}</button>`)}
            <button class="pin" aria-label="pin">${icon("pin")}</button>
          </nav>
          <div class="caption">D1.SLDPRT</div>
          <label class="search">${icon("swcube")}<input type="search" placeholder="搜索知识库" aria-label="搜索知识库">${icon("lens")}<span class="caret"></span></label>
          <div class="system">
            <button aria-label="user">${icon("person")}</button>
            <button class="ask">?</button><span class="caret"></span>
            ${["min", "max", "close"].map((x) => html`<button aria-label=${x}>${icon(x)}</button>`)}
          </div>
        </header>

        <div class="body">
          <sw-toolbar .tools=${LEFT_TOOLS}></sw-toolbar>
          <aside class="tree-panel">
            <div class="splitter"><span class="dot"></span></div>
            <div class="tabs">
              ${["part", "list", "config", "target", "ballDark"].map((x, i) => html`<button class=${classMap({ current: i === 0 })} aria-label=${x}>${icon(x)}</button>`)}
              <button class="next" aria-label="next"><svg width="8" height="12" viewBox="0 0 8 12"><path d="M1 1L6.500 6L1 11" fill="none" stroke="#777" stroke-width="2"/></svg></button>
            </div>
            <div class="filter">${icon("funnel")}</div>
            <ul class="tree">
              <li class="root">${icon("part")}<span>D1  (Default&lt;&lt;Default&gt;_Display State 1</span></li>
              ${TREE.map(([i, label, has]) => html`<li><span class=${classMap({ twist: true, has: !!has })}></span>${icon(i)}<span>${label}</span></li>`)}
            </ul>
            <div class="handle"><span class="dot"></span></div>
          </aside>

          <main class="viewport">
            <div class="heads">
              <div class="view">
                ${([["section"], ["light"], ["orient", 1], ["display", 1], ["eye", 1], ["ballpen"], ["scene", 1], ["monitor", 1]] as [string, number?][])
                  .map(([x, d]) => html`<button aria-label=${x}>${icon(x)}</button>${d ? html`<span class="caret"></span>` : nothing}`)}
              </div>
              <div class="docs">${["paneL", "paneR", "min", "restore", "close"].map((x) => html`<button aria-label=${x}>${icon(x)}</button>`)}</div>
            </div>
            <svg class="model" width="375" height="400" viewBox="30 30 1125 1200" aria-hidden="true">
              <g stroke="#0c0c10" stroke-width="3.500" stroke-linejoin="round">
                ${FACETS.map(([p, f]) => svg`<polygon points=${p} fill=${f}/>`)}
                <path d=${EDGES} fill="none"/>
              </g>
            </svg>
            <div class="panes">${["home", "books", "openf", "palette", "ball", "list"].map((x) => html`<button class=${classMap({ current: x === "ball" })} aria-label=${x}>${icon(x)}</button>`)}</div>
            <div class="thumb"></div>
            <div class="below"></div>
          </main>
          <sw-toolbar class="sketch-tools" .tools=${RIGHT_TOOLS}></sw-toolbar>
        </div>

        <footer class="status">
          <span></span><span class="mode">在编辑 零件</span>
          <span class="units">MMGS</span><span class="up"></span><span class="gap"></span>${icon("tag")}
        </footer>
      </div></div>

      <sw-menu class="tools-menu" .items=${TOOLS_MENU}></sw-menu>
      <sw-menu class="macro-menu" .items=${MACRO_MENU}></sw-menu>
      <svg class="cursor" width="14" height="20" viewBox="0 0 14 20" aria-hidden="true">${pointer(1, 1.500, 0.950, "#fff", "#223")}</svg>
    `;
  }
}
